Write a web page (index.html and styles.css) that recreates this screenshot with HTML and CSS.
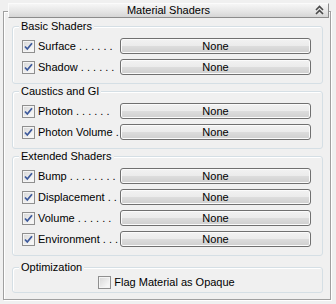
FILE: index.html
```html
<!DOCTYPE html>
<html>
<head>
<meta charset="utf-8">
<link rel="stylesheet" href="styles.css">
</head>
<body>
<div class="rollout">
  <div class="rollout-head">
    <span class="title">Material Shaders</span>
    <svg class="collapse" width="9" height="10" viewBox="0 0 9 10"><path d="M1 5 L4.5 1.5 L8 5 M1 9 L4.5 5.5 L8 9" fill="none" stroke="#4a4a4a" stroke-width="1.6"/></svg>
  </div>
  <div class="rollout-body">
    <div class="group">
      <div class="group-title">Basic Shaders</div>
      <div class="rows">
        <div class="row"><span class="cb checked"><svg width="11" height="11" viewBox="0 0 11 11"><path d="M2 5.5 L4.3 8 L9 2.3" fill="none" stroke="#3d5a9c" stroke-width="1.8"/></svg></span><span class="lbl">Surface . . . . . .</span><button class="btn">None</button></div>
        <div class="row"><span class="cb checked"><svg width="11" height="11" viewBox="0 0 11 11"><path d="M2 5.5 L4.3 8 L9 2.3" fill="none" stroke="#3d5a9c" stroke-width="1.8"/></svg></span><span class="lbl">Shadow . . . . . .</span><button class="btn">None</button></div>
      </div>
    </div>
    <div class="group">
      <div class="group-title">Caustics and GI</div>
      <div class="rows">
        <div class="row"><span class="cb checked"><svg width="11" height="11" viewBox="0 0 11 11"><path d="M2 5.5 L4.3 8 L9 2.3" fill="none" stroke="#3d5a9c" stroke-width="1.8"/></svg></span><span class="lbl">Photon . . . . . .</span><button class="btn">None</button></div>
        <div class="row"><span class="cb checked"><svg width="11" height="11" viewBox="0 0 11 11"><path d="M2 5.5 L4.3 8 L9 2.3" fill="none" stroke="#3d5a9c" stroke-width="1.8"/></svg></span><span class="lbl">Photon Volume .</span><button class="btn">None</button></div>
      </div>
    </div>
    <div class="group">
      <div class="group-title">Extended Shaders</div>
      <div class="rows">
        <div class="row"><span class="cb checked"><svg width="11" height="11" viewBox="0 0 11 11"><path d="M2 5.5 L4.3 8 L9 2.3" fill="none" stroke="#3d5a9c" stroke-width="1.8"/></svg></span><span class="lbl">Bump . . . . . . . .</span><button class="btn">None</button></div>
        <div class="row"><span class="cb checked"><svg width="11" height="11" viewBox="0 0 11 11"><path d="M2 5.5 L4.3 8 L9 2.3" fill="none" stroke="#3d5a9c" stroke-width="1.8"/></svg></span><span class="lbl">Displacement . .</span><button class="btn">None</button></div>
        <div class="row"><span class="cb checked"><svg width="11" height="11" viewBox="0 0 11 11"><path d="M2 5.5 L4.3 8 L9 2.3" fill="none" stroke="#3d5a9c" stroke-width="1.8"/></svg></span><span class="lbl">Volume . . . . . .</span><button class="btn">None</button></div>
        <div class="row"><span class="cb checked"><svg width="11" height="11" viewBox="0 0 11 11"><path d="M2 5.5 L4.3 8 L9 2.3" fill="none" stroke="#3d5a9c" stroke-width="1.8"/></svg></span><span class="lbl">Environment . . .</span><button class="btn">None</button></div>
      </div>
    </div>
    <div class="group group-opt">
      <div class="group-title">Optimization</div>
      <div class="opt-row"><span class="cb"></span><span class="opt-lbl">Flag Material as Opaque</span></div>
    </div>
  </div>
</div>
</body>
</html>
```
FILE: styles.css
```css
html, body {
  margin: 0;
  padding: 0;
  background: #f0f0f0;
}
body {
  font-family: "Liberation Sans", Arial, sans-serif;
  font-size: 11px;
  color: #000;
  width: 336px;
  height: 304px;
  overflow: hidden;
}
.rollout {
  margin: 11px 5px 0 3px;
  border: 1px solid #a0a0a0;
  box-shadow: inset 1px 1px 0 #fff, 1px 1px 0 #fff;
}
.rollout-head {
  margin: -9px 1px 0 4px;
  height: 13px;
  border: 1px solid;
  border-color: #fbfbfb #8c8c8c #8c8c8c #fbfbfb;
  background: linear-gradient(#f6f6f6, #e6e6e6 55%, #d6d6d6);
  display: flex;
  align-items: center;
  justify-content: center;
  position: relative;
}
.title {
  line-height: 13px;
}
.collapse {
  position: absolute;
  right: 4px;
  top: 1px;
}
.rollout-body {
  display: flex;
  flex-direction: column;
  gap: 7px;
  padding: 8px 7px 6px 8px;
}
.group {
  border: 1px solid #d5dfe5;
  border-radius: 3px;
  box-shadow: inset 1px 1px 0 #fff;
  padding: 0 11px 8px 9px;
}
.group-title {
  margin: -7px 0 0 -3px;
  padding: 0 2px;
  line-height: 13px;
  background: #f0f0f0;
  width: fit-content;
}
.rows {
  margin-top: 5px;
  display: flex;
  flex-direction: column;
  gap: 5px;
}
.row {
  display: flex;
  align-items: center;
  height: 16px;
}
.cb {
  flex: none;
  width: 11px;
  height: 11px;
  border: 1px solid #8f8f8f;
  background: linear-gradient(135deg, #d6d6d6, #f6f6f6 80%);
  box-shadow: inset 0 0 0 1px #f4f4f4;
  display: flex;
  align-items: center;
  justify-content: center;
}
.cb svg {
  display: block;
}
.lbl {
  flex: none;
  width: 82px;
  margin-left: 3px;
  white-space: nowrap;
  line-height: 14px;
}
.btn {
  flex: none;
  width: 191px;
  height: 16px;
  margin: 0;
  padding: 0;
  border: 1px solid #707070;
  border-radius: 3px;
  background: linear-gradient(#f2f2f2, #ebebeb 50%, #dddddd 50%, #cfcfcf);
  box-shadow: inset 0 0 0 1px #fbfbfb;
  font-family: "Liberation Sans", Arial, sans-serif;
  font-size: 11px;
  line-height: 13px;
  color: #000;
  text-align: center;
}
.group-opt {
  margin-top: 4px;
  padding-bottom: 3px;
}
.opt-row {
  margin-top: 2px;
  height: 13px;
  display: flex;
  align-items: center;
  justify-content: center;
}
.opt-lbl {
  margin-left: 3px;
  line-height: 13px;
  white-space: nowrap;
}
```
